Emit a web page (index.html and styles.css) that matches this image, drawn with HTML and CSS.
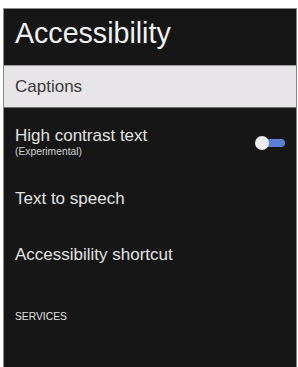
FILE: index.html
```html
<!DOCTYPE html>
<html lang="en">
<head>
  <meta charset="UTF-8">
  <meta name="viewport" content="width=device-width, initial-scale=1.0">
  <title>Accessibility</title>
  <link rel="stylesheet" href="styles.css">
</head>
<body>
  <div class="screen">
    <div class="header">
      <h1>Accessibility</h1>
    </div>
    <div class="item selected">Captions</div>
    <div class="item item-switch">
      <div class="item-text">
        <div class="item-title">High contrast text</div>
        <div class="item-sub">(Experimental)</div>
      </div>
      <div class="toggle">
        <span class="track"></span>
        <span class="knob"></span>
      </div>
    </div>
    <div class="item">Text to speech</div>
    <div class="item">Accessibility shortcut</div>
    <div class="section">SERVICES</div>
  </div>
</body>
</html>
```

FILE: styles.css
```css
body {
  margin: 0;
  padding: 0;
  background: #fff;
  font-family: "Liberation Sans", Arial, sans-serif;
}
.screen {
  margin: 8px 1px 0 3px;
  height: 359px;
  box-sizing: border-box;
  background-color: #161616;
  border: 1px solid #8a8a8a;
  border-bottom: none;
  overflow: hidden;
}
.header {
  height: 56px;
  padding: 8px 11px 0;
  box-sizing: border-box;
}
h1 {
  margin: 0;
  font-size: 28.6px;
  line-height: 32px;
  font-weight: normal;
  color: #f2f2f2;
}
.item {
  display: flex;
  align-items: center;
  min-height: 56px;
  padding: 0 11px;
  box-sizing: border-box;
  font-size: 17px;
  line-height: 20px;
  color: #e2e2e2;
}
.selected {
  min-height: 43px;
  padding: 10px 11px;
  background-color: #e8e5e8;
  color: #3a3a3a;
  border-top: 1px solid #9a9a9a;
  border-bottom: 1px solid #6e6e6e;
}
.item-switch {
  justify-content: space-between;
  min-height: 63px;
  padding: 18px 11px 13px;
}
.item-sub {
  font-size: 10.3px;
  line-height: 12px;
  color: #cfcfcf;
}
.toggle {
  position: relative;
  width: 30px;
  height: 14px;
  margin-top: 2px;
}
.track {
  position: absolute;
  left: 8px;
  right: 0;
  top: 3px;
  height: 8px;
  border-radius: 4px;
  background-color: #5b7fd8;
}
.knob {
  position: absolute;
  left: 0;
  top: 0;
  width: 14px;
  height: 14px;
  border-radius: 50%;
  background-color: #ececec;
}
.section {
  padding: 28px 11px 0;
  font-size: 10.3px;
  line-height: 12px;
  color: #e2e2e2;
}
```
